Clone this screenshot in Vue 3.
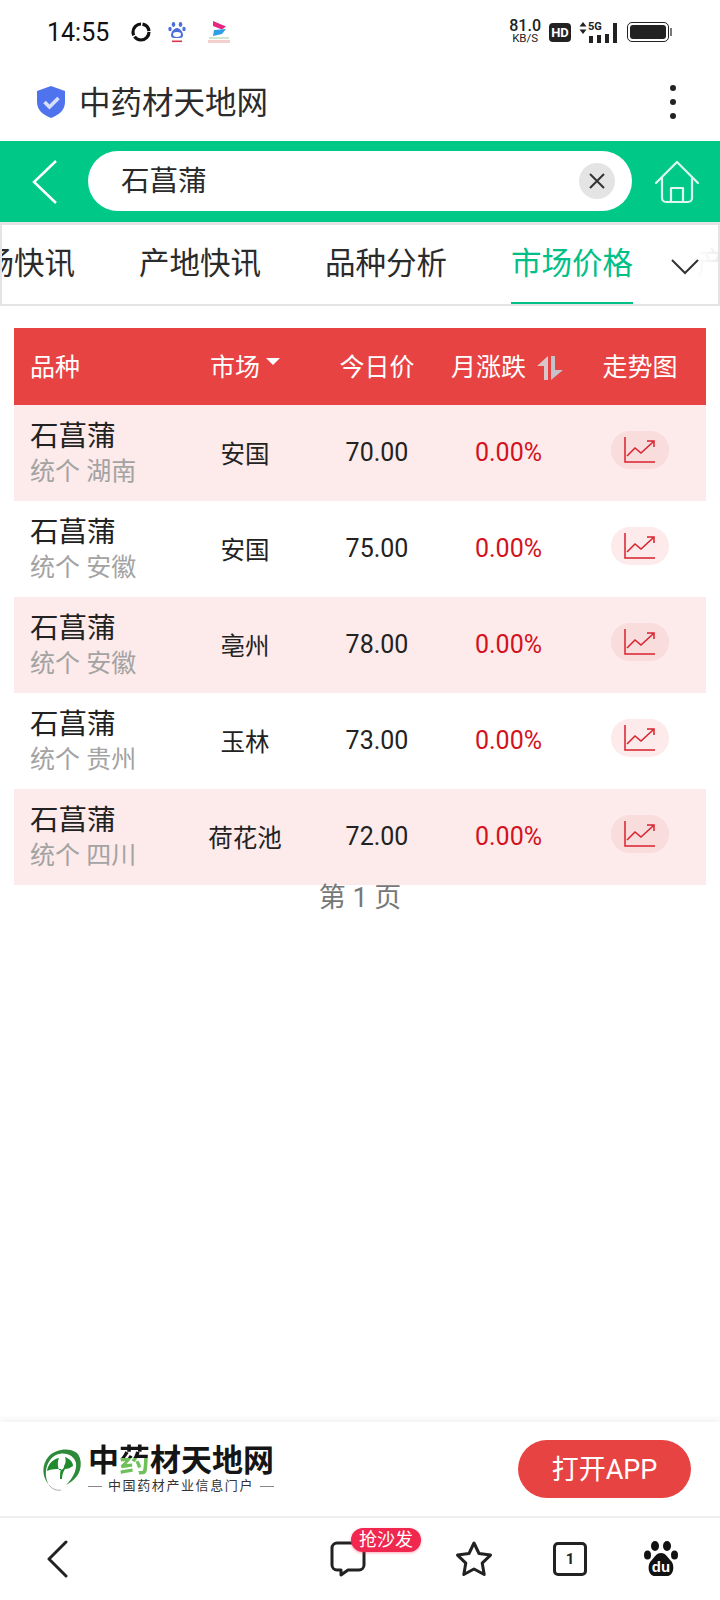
<script setup>
const tabs = ['市场快讯', '产地快讯', '品种分析', '市场价格', '产地']

const rows = [
  { name: '石菖蒲', spec: '统个 湖南', market: '安国', price: '70.00', change: '0.00%' },
  { name: '石菖蒲', spec: '统个 安徽', market: '安国', price: '75.00', change: '0.00%' },
  { name: '石菖蒲', spec: '统个 安徽', market: '亳州', price: '78.00', change: '0.00%' },
  { name: '石菖蒲', spec: '统个 贵州', market: '玉林', price: '73.00', change: '0.00%' },
  { name: '石菖蒲', spec: '统个 四川', market: '荷花池', price: '72.00', change: '0.00%' }
]
</script>

<template>
  <div class="page">
    <div class="status">
      <div class="status-left">
        <span class="time">14:55</span>
        <svg class="ring" width="22" height="22" viewBox="0 0 22 22">
          <circle cx="11" cy="11" r="8" fill="none" stroke="#111" stroke-width="3.2" stroke-dasharray="20 1.5 16 1.5 10 1.5" />
        </svg>
        <svg class="mini-paw" width="18" height="22" viewBox="0 0 18 22">
          <ellipse cx="5.5" cy="3.5" rx="1.8" ry="2.4" fill="#4a6fd8" />
          <ellipse cx="12.5" cy="3.5" rx="1.8" ry="2.4" fill="#4a6fd8" />
          <ellipse cx="2" cy="8" rx="1.7" ry="2.2" fill="#4a6fd8" />
          <ellipse cx="16" cy="8" rx="1.7" ry="2.2" fill="#4a6fd8" />
          <path d="M9 7c-3 0-6 4-6 7s2 3 6 3 6 0 6-3-3-7-6-7z" fill="#4a6fd8" />
          <ellipse cx="9" cy="13.5" rx="4" ry="2.4" fill="#fff" />
          <rect x="4" y="19.5" width="10" height="1.6" fill="#d8364f" />
        </svg>
        <svg class="mini-app" width="24" height="24" viewBox="0 0 24 24">
          <path d="M6 1l13 5.500-4 3L6 6z" fill="#e8267f" />
          <path d="M19 9l-4 5-9 2 1-6z" fill="#2f9fe8" />
          <path d="M1 20h22v3H1z" fill="#f3d0cc" />
          <path d="M2 17h20v2H2z" fill="#cfe6d0" />
        </svg>
      </div>
      <div class="status-right">
        <div class="speed"><span class="speed-num">81.0</span><span class="speed-unit">KB/S</span></div>
        <span class="hd">HD</span>
        <div class="net">
          <svg width="8" height="14" viewBox="0 0 8 14">
            <path d="M4 1l3.5 4.5h-7zM4 13l3.5-4.5h-7z" fill="#222" />
          </svg>
          <span class="five-g">5G</span>
          <div class="bars">
            <i class="bar b1"></i><i class="bar b2"></i><i class="bar b3"></i><i class="bar b4"></i>
          </div>
        </div>
        <div class="battery"><div class="battery-fill"></div></div>
        <i class="battery-nub"></i>
      </div>
    </div>

    <div class="site">
      <div class="site-name">
        <svg width="32" height="34" viewBox="0 0 32 34">
          <path d="M16 1l14 5v11c0 8-6 13-14 16C8 30 2 25 2 17V6z" fill="#4f73ec" />
          <path d="M9.500 17l5 5 9-9" fill="none" stroke="#d6dffb" stroke-width="3.600" />
        </svg>
        <span class="site-title">中药材天地网</span>
      </div>
      <div class="dots"><i></i><i></i><i></i></div>
    </div>

    <div class="search-bar">
      <svg class="back" width="28" height="44" viewBox="0 0 28 44">
        <path d="M25 1L3 22l22 21" fill="none" stroke="#fff" stroke-width="2.500" />
      </svg>
      <div class="search">
        <span class="search-text">石菖蒲</span>
        <div class="clear">
          <svg width="16" height="16" viewBox="0 0 16 16">
            <path d="M1 1l14 14M15 1L1 15" stroke="#333" stroke-width="2" />
          </svg>
        </div>
      </div>
      <svg class="home" width="46" height="44" viewBox="0 0 46 44">
        <path d="M2 23L23 2l21 21M8 18v20a4 4 0 0 0 4 4h22a4 4 0 0 0 4-4V18M17 42V28h12v14" fill="none" stroke="#dff7ee" stroke-width="2.200" stroke-linejoin="round" stroke-linecap="round" />
      </svg>
    </div>

    <div class="tabs">
      <div class="tab-track">
        <div v-for="tab in tabs" :key="tab" class="tab" :class="{ active: tab === '市场价格' }">{{ tab }}</div>
      </div>
      <div class="tab-more">
        <svg width="28" height="16" viewBox="0 0 28 16">
          <path d="M1 1l13 13L27 1" fill="none" stroke="#333" stroke-width="2" />
        </svg>
      </div>
    </div>

    <div class="table">
      <div class="row head">
        <div class="cell first">品种</div>
        <div class="cell">市场<i class="caret"></i></div>
        <div class="cell">今日价</div>
        <div class="cell">
          月涨跌
          <svg class="sort" width="28" height="28" viewBox="0 0 28 28">
            <path d="M12 2v24H8V12H1z" fill="#d9c6c9" />
            <path d="M15 26V2h4v14h8z" fill="#c3c3cb" />
          </svg>
        </div>
        <div class="cell">走势图</div>
      </div>
      <div v-for="(row, i) in rows" :key="i" class="row item" :class="{ pink: i % 2 === 0 }">
        <div class="cell first name-cell">
          <div class="name">{{ row.name }}</div>
          <div class="spec">{{ row.spec }}</div>
        </div>
        <div class="cell market">{{ row.market }}</div>
        <div class="cell price">{{ row.price }}</div>
        <div class="cell change">{{ row.change }}</div>
        <div class="cell">
          <div class="trend">
            <svg width="32" height="28" viewBox="0 0 32 28">
              <path d="M1 1v25h30M3 20l8-8 6 5 12-11M23 5h7v6" fill="none" stroke="#d9202c" stroke-width="1.500" />
            </svg>
          </div>
        </div>
      </div>
      <div class="page-no">第 1 页</div>
    </div>

    <div class="spacer"></div>

    <div class="promo">
      <div class="logo">
        <svg width="42" height="44" viewBox="0 0 42 44">
          <path d="M8 38C1 30 0 18 8 9 15 2 28 0 36 6c5 5 5 16 0 23-3 4-7 7-11 9 6-6 11-14 10-22C33 8 24 4 15 8 5 13 2 28 8 38z" fill="#2e8a3a" />
          <path d="M6 24c1-7 6-12 12-13-2 5-1 8 0 12 3 0 5-1 5-4 2-3 2-6 1-9 5 2 8 5 8 9-3 2-5 3-8 3-2 3-3 6-3 10l-2 0c0-4 0-7 1-10-5 0-10 0-14 2z" fill="#1f8a2e" />
          <path d="M8 38c3 4 8 6 12 5" fill="none" stroke="#aaa" stroke-width="1" />
        </svg>
        <div class="logo-text">
          <div class="logo-title">中<em>药</em>材天地网</div>
          <div class="logo-sub"><i></i><span>中国药材产业信息门户</span><i></i></div>
        </div>
      </div>
      <button class="open" type="button">打开APP</button>
    </div>

    <div class="nav">
      <svg class="nav-back" width="24" height="38" viewBox="0 0 24 38">
        <path d="M20 2L3 19l17 17" fill="none" stroke="#222" stroke-width="3" stroke-linecap="round" stroke-linejoin="round" />
      </svg>
      <div class="nav-right">
        <div class="comment">
          <svg width="36" height="36" viewBox="0 0 36 36">
            <path d="M7 2h22a5 5 0 0 1 5 5v17a5 5 0 0 1-5 5H18l-7 5v-5H7a5 5 0 0 1-5-5V7a5 5 0 0 1 5-5z" fill="none" stroke="#222" stroke-width="3" stroke-linejoin="round" />
          </svg>
          <span class="badge">抢沙发</span>
        </div>
        <svg class="star" width="38" height="38" viewBox="0 0 38 38">
          <path d="M19 3l5 10.500 11.500 1.600-8.300 8 2 11.400L19 29l-10.200 5.500 2-11.400-8.300-8L14 13.500z" fill="none" stroke="#222" stroke-width="3" stroke-linejoin="round" />
        </svg>
        <div class="tab-count">1</div>
        <svg class="paw" width="34" height="36" viewBox="0 0 34 36">
          <ellipse cx="11" cy="5" rx="4" ry="5" fill="#111" />
          <ellipse cx="23" cy="5" rx="4" ry="5" fill="#111" />
          <ellipse cx="3.500" cy="14" rx="3.500" ry="4.500" fill="#111" />
          <ellipse cx="30.500" cy="14" rx="3.500" ry="4.500" fill="#111" />
          <path d="M17 12c-5 0-7 5-10 8-4 4-3 15 4 15h12c7 0 8-11 4-15-3-3-5-8-10-8z" fill="#111" />
          <text x="17" y="31" text-anchor="middle" class="du">du</text>
        </svg>
      </div>
    </div>
  </div>
</template>

<style>
html, body {
  margin: 0;
  background: #fff;
}
</style>

<style scoped>
.page {
  width: 720px;
  height: 1600px;
  display: flex;
  flex-direction: column;
  overflow: hidden;
  background: #fff;
  color: #222;
  font-family: Roboto, "Noto Sans CJK SC", sans-serif;
}

.status {
  height: 70px;
  flex: none;
  display: flex;
  justify-content: space-between;
  align-items: center;
  padding: 0 48px 6px 47px;
  box-sizing: border-box;
}

.status-left,
.status-right {
  display: flex;
  align-items: center;
}

.time {
  font-size: 25px;
  color: #111;
  width: 83px;
}

.mini-paw {
  margin-left: 16px;
}

.mini-app {
  margin-left: 21px;
}

.speed {
  display: flex;
  flex-direction: column;
  align-items: center;
  color: #222;
  line-height: 12px;
  margin-right: 8px;
}

.speed-num {
  font-size: 16px;
  font-weight: 500;
}

.speed-unit {
  font-size: 11.500px;
}

.hd {
  width: 22px;
  height: 19px;
  border-radius: 4px;
  background: #222;
  color: #fff;
  font-size: 13px;
  line-height: 19px;
  font-weight: 700;
  text-align: center;
  margin-right: 8px;
}

.net {
  position: relative;
  width: 38px;
  height: 22px;
  margin-right: 10px;
}

.net svg {
  position: absolute;
  left: 0;
  top: 0;
}

.five-g {
  position: absolute;
  left: 9px;
  top: -1px;
  font-size: 11px;
  font-weight: 700;
  line-height: 14px;
}

.bars {
  position: absolute;
  right: 0;
  bottom: 0;
  display: flex;
  align-items: flex-end;
  gap: 4px;
}

.bar {
  width: 4px;
  background: #222;
  display: block;
}

.b1 { height: 7px; }
.b2 { height: 8px; }
.b3 { height: 9px; }
.b4 { height: 20px; }

.battery {
  width: 42px;
  height: 20px;
  box-sizing: border-box;
  border: 1px solid #222;
  border-radius: 5px;
  padding: 2px;
}

.battery-fill {
  height: 100%;
  background: #222;
  border-radius: 3px;
}

.battery-nub {
  width: 2px;
  height: 8px;
  margin-left: 1px;
  background: #777;
  display: block;
}

.site {
  height: 71px;
  flex: none;
  display: flex;
  justify-content: space-between;
  align-items: center;
  padding: 0 44px 8px 35px;
  box-sizing: border-box;
}

.site-name {
  display: flex;
  align-items: center;
  gap: 12px;
  font-size: 31.500px;
  color: #2b2b2b;
}

.site-title {
  padding-bottom: 3px;
}

.dots {
  display: flex;
  flex-direction: column;
  gap: 8px;
}

.dots i {
  width: 6px;
  height: 6px;
  border-radius: 50%;
  background: #222;
  display: block;
}

.search-bar {
  height: 81px;
  flex: none;
  display: flex;
  align-items: center;
  background: #00c987;
  padding-left: 31px;
  box-sizing: border-box;
}

.search {
  width: 544px;
  height: 60px;
  margin: 0 0 2px 29px;
  padding: 0 17px 0 33px;
  box-sizing: border-box;
  border-radius: 30px;
  background: #fff;
  display: flex;
  align-items: center;
  justify-content: space-between;
  font-size: 28.500px;
  color: #2a2a2a;
}

.search-text {
  padding-bottom: 5px;
}

.clear {
  width: 36px;
  height: 36px;
  border-radius: 50%;
  background: #e4e4e4;
  display: flex;
  align-items: center;
  justify-content: center;
}

.home {
  margin-left: 22px;
}

.tabs {
  position: relative;
  height: 84px;
  flex: none;
  box-sizing: border-box;
  border: 2px solid #e4e4e4;
  border-top-width: 3px;
  overflow: hidden;
}

.tab-track {
  display: flex;
  gap: 64px;
  margin-left: -49px;
  height: 79px;
}

.tab {
  flex: none;
  width: 122px;
  box-sizing: border-box;
  height: 79px;
  font-size: 30.500px;
  line-height: 78px;
  color: #2b2b2b;
  border-bottom: 2px solid transparent;
}

.tab.active {
  color: #00c087;
  border-bottom-color: #00c087;
}

.tab-more {
  position: absolute;
  right: 0;
  top: 0;
  bottom: 0;
  width: 60px;
  display: flex;
  align-items: center;
  padding-left: 13px;
  padding-top: 4px;
  box-sizing: border-box;
  background: linear-gradient(to right, #fff 60%, rgba(255, 255, 255, 0.92));
}

.table {
  margin: 22px 14px 0;
}

.row {
  display: grid;
  grid-template-columns: 163px 136px 128px 133px 132px;
  align-items: center;
  text-align: center;
}

.head {
  height: 77px;
  background: #e84343;
  color: #fff;
  font-size: 25px;
}

.head .cell {
  display: flex;
  align-items: center;
  justify-content: center;
  padding-bottom: 4px;
}

.head .first {
  justify-content: flex-start;
}

.first {
  padding-left: 16px;
  text-align: left;
}

.caret {
  width: 0;
  height: 0;
  margin: 0 0 6px 6px;
  border-left: 7px solid transparent;
  border-right: 7px solid transparent;
  border-top: 7px solid #fff;
}

.sort {
  margin: 6px 0 0 10px;
}

.item {
  height: 96px;
}

.pink {
  background: #fdeaea;
}

.name-cell {
  padding-top: 2px;
}

.name {
  font-size: 28.500px;
  line-height: 36px;
  color: #222;
}

.spec {
  font-size: 25px;
  line-height: 34px;
  color: #a3a3a3;
}

.market {
  font-size: 24.500px;
  color: #222;
  padding-bottom: 2px;
}

.price,
.change {
  font-size: 25px;
  padding-bottom: 2px;
}

.price {
  color: #222;
}

.change {
  color: #d4121e;
  padding-left: 2px;
}

.trend {
  width: 58px;
  height: 38px;
  margin: 0 auto 6px;
  border-radius: 19px;
  display: flex;
  align-items: center;
  justify-content: center;
}

.pink .trend {
  background: #f9dcdc;
}

.item:not(.pink) .trend {
  background: #fdeaea;
}

.page-no {
  text-align: center;
  font-size: 27px;
  line-height: 26px;
  color: #777;
}

.spacer {
  flex: 1;
}

.promo {
  height: 94px;
  flex: none;
  display: flex;
  align-items: center;
  justify-content: space-between;
  padding: 0 29px 0 41px;
  box-sizing: border-box;
  box-shadow: 0 -3px 6px rgba(0, 0, 0, 0.05);
}

.logo {
  display: flex;
  align-items: center;
  gap: 5px;
}

.logo-title {
  font-size: 31px;
  line-height: 34px;
  font-weight: 700;
  color: #151515;
}

.logo-title em {
  font-style: normal;
  color: transparent;
  background: linear-gradient(to bottom, #151515 42%, #6fc05a 42%);
  -webkit-background-clip: text;
  background-clip: text;
}

.logo-sub {
  display: flex;
  align-items: center;
  gap: 6px;
  font-size: 13px;
  line-height: 16px;
  color: #333;
  letter-spacing: 1.600px;
}

.logo-sub i {
  flex: 1;
  height: 1px;
  background: #888;
  min-width: 14px;
}

.open {
  width: 173px;
  height: 58px;
  border: none;
  border-radius: 29px;
  background: #e84343;
  color: #fff;
  font-family: inherit;
  font-size: 27px;
  padding: 0 0 3px;
}

.nav {
  height: 84px;
  flex: none;
  box-sizing: border-box;
  border-top: 2px solid #eee;
  display: flex;
  align-items: center;
  justify-content: space-between;
  padding: 0 42px 0 46px;
}

.nav-right {
  display: flex;
  align-items: center;
}

.comment {
  position: relative;
  width: 36px;
  height: 36px;
}

.star {
  margin-left: 89px;
}

.tab-count {
  margin-left: 60px;
}

.paw {
  margin-left: 57px;
}

.badge {
  position: absolute;
  left: 21px;
  top: -13px;
  width: 70px;
  height: 24px;
  border-radius: 12px;
  background: #f0284f;
  color: #fff;
  font-size: 18px;
  line-height: 24px;
  text-align: center;
  box-shadow: 0 1px 3px rgba(240, 40, 79, 0.4);
}

.tab-count {
  width: 34px;
  height: 34px;
  box-sizing: border-box;
  border: 3px solid #222;
  border-radius: 5px;
  font-size: 15px;
  font-weight: 700;
  line-height: 28px;
  text-align: center;
  color: #222;
}

.du {
  font-family: "Liberation Sans", sans-serif;
  font-size: 15px;
  font-weight: 700;
  fill: #fff;
}
</style>
